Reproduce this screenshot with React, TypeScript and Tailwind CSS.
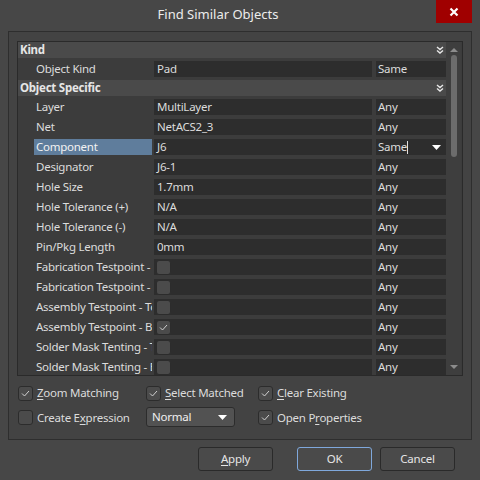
import React from 'react';

type Row = { label: string; value?: string; mode: string; check?: boolean; selected?: boolean };

const specific: Row[] = [
  { label: 'Layer', value: 'MultiLayer', mode: 'Any' },
  { label: 'Net', value: 'NetACS2_3', mode: 'Any' },
  { label: 'Component', value: 'J6', mode: 'Same', selected: true },
  { label: 'Designator', value: 'J6-1', mode: 'Any' },
  { label: 'Hole Size', value: '1.7mm', mode: 'Any' },
  { label: 'Hole Tolerance (+)', value: 'N/A', mode: 'Any' },
  { label: 'Hole Tolerance (-)', value: 'N/A', mode: 'Any' },
  { label: 'Pin/Pkg Length', value: '0mm', mode: 'Any' },
  { label: 'Fabrication Testpoint - Top', check: false, mode: 'Any' },
  { label: 'Fabrication Testpoint - Bottom', check: false, mode: 'Any' },
  { label: 'Assembly Testpoint - Top', check: false, mode: 'Any' },
  { label: 'Assembly Testpoint - Bottom', check: true, mode: 'Any' },
  { label: 'Solder Mask Tenting - Top', check: false, mode: 'Any' },
  { label: 'Solder Mask Tenting - Bottom', check: false, mode: 'Any' },
];

function Tick() {
  return (
    <svg width="9" height="7" viewBox="0 0 9 7" className="block">
      <path d="M1 3.5 L3.5 6 L8 1" fill="none" stroke="#d0d0d0" strokeWidth="1" />
    </svg>
  );
}

function Check({ on }: { on?: boolean }) {
  return (
    <div className="flex h-[15px] w-[15px] items-center justify-center rounded-[3px] border border-[#2c2c2c] bg-[#4b4b4b]">
      {on && <Tick />}
    </div>
  );
}

function Chevrons() {
  return (
    <svg width="8" height="8" viewBox="0 0 8 8" className="block">
      <path d="M1 1 L4 3.5 L7 1 M1 4.5 L4 7 L7 4.5" fill="none" stroke="#e8e8e8" strokeWidth="1.4" />
    </svg>
  );
}

function Caret({ color = '#ffffff' }: { color?: string }) {
  return (
    <svg width="9" height="5" viewBox="0 0 9 5" className="block">
      <path d="M0 0 H9 L4.5 5 Z" fill={color} />
    </svg>
  );
}

function Header({ title }: { title: string }) {
  return (
    <div className="flex h-[16px] items-center justify-between bg-[#4a4a4a] pl-[2px] pr-[2px]">
      <span className="font-bold text-[#e6e6e6]">{title}</span>
      <Chevrons />
    </div>
  );
}

function DataRow({ row }: { row: Row }) {
  return (
    <div className="flex h-[20px] shrink-0 bg-[#3c3c3c]">
      <div
        className={`ml-[16px] mt-[3px] h-[16px] w-[118px] overflow-hidden whitespace-nowrap px-[2px] leading-[16px] ${row.selected ? 'bg-[#5f7d9c] text-[#f2f2f2]' : 'text-[#dcdcdc]'}`}
      >
        {row.label}
      </div>
      <div className="ml-[2px] mt-[3px] flex h-[16px] w-[218px] items-center bg-[#2d2d2d] pl-[3px] leading-[16px] text-[#dcdcdc]">
        {row.check === undefined ? row.value : <div className="-ml-[1px]"><Check on={row.check} /></div>}
      </div>
      <div className="ml-[4px] mt-[3px] flex h-[16px] w-[70px] items-center bg-[#2d2d2d] pl-[2px] leading-[16px] text-[#dcdcdc]">
        {row.selected ? (
          <>
            <span>{row.mode}</span>
            <span className="h-[13px] w-px bg-[#e0e0e0]" />
            <span className="ml-auto mr-[5px]">
              <Caret />
            </span>
          </>
        ) : (
          row.mode
        )}
      </div>
    </div>
  );
}

function Opt({ label, u, on }: { label: string; u: number; on?: boolean }) {
  return (
    <div className="flex items-center gap-[4px] text-[#dcdcdc]">
      <Check on={on} />
      <span>
        {label.slice(0, u)}
        <span className="underline underline-offset-2">{label[u]}</span>
        {label.slice(u + 1)}
      </span>
    </div>
  );
}

function Btn({ children, primary }: { children: React.ReactNode; primary?: boolean }) {
  return (
    <button
      className={`h-[24px] w-[75px] rounded-[3px] border bg-[#4a4a4a] text-[#e6e6e6] ${primary ? 'border-[#7fa8dc]' : 'border-[#2a2a2a]'}`}
    >
      {children}
    </button>
  );
}

export default function App() {
  return (
    <div
      className="flex h-[480px] w-[480px] flex-col overflow-hidden bg-[#474747] text-[11.5px] leading-[16px] tracking-[-0.25px]"
      style={{ fontFamily: '"Noto Sans", "Open Sans", sans-serif' }}
    >
      <div className="flex h-[31px] shrink-0">
        <div className="flex-1 pt-[6px] text-center text-[13px] tracking-normal text-[#ececec]">Find Similar Objects</div>
        <div className="mr-[8px] flex h-[23px] w-[36px] items-center justify-center bg-[#a00000]">
          <svg width="10" height="10" viewBox="0 0 10 10">
            <path d="M1.5 1.5 L8.5 8.5 M8.5 1.5 L1.5 8.5" stroke="#ffffff" strokeWidth="2.2" />
          </svg>
        </div>
      </div>

      <div className="mx-[8px] flex h-[409px] shrink-0 flex-col border border-[#2e2e2e] bg-[#434343] px-[8px] pt-[9px]">
        <div className="flex h-[335px] shrink-0 overflow-hidden border border-[#2a2a2a] bg-[#3c3c3c]">
          <div className="flex w-[428px] flex-col">
            <Header title="Kind" />
            <DataRow row={{ label: 'Object Kind', value: 'Pad', mode: 'Same' }} />
            <div className="h-[2px] shrink-0 bg-[#3c3c3c]" />
            <Header title="Object Specific" />
            {specific.map((r, i) => (
              <DataRow key={i} row={r} />
            ))}
          </div>
          <div className="flex w-[15px] flex-col items-center bg-[#3e3e3e] pl-px">
            <div className="mt-[6px] rotate-180">
              <svg width="8" height="4" viewBox="0 0 8 4" className="block">
                <path d="M0 0 H8 L4 4 Z" fill="#8c8c8c" />
              </svg>
            </div>
            <div className="mt-[3px] h-[102px] w-[6px] rounded-[3px] bg-[#6c6c6c]" />
            <div className="mt-auto mb-[6px]">
              <svg width="8" height="4" viewBox="0 0 8 4" className="block">
                <path d="M0 0 H8 L4 4 Z" fill="#8c8c8c" />
              </svg>
            </div>
          </div>
        </div>

        <div className="ml-[1px] mt-[9px] grid grid-cols-[128px_112px_1fr] gap-y-[7px]">
          <Opt label="Zoom Matching" u={0} on />
          <Opt label="Select Matched" u={0} on />
          <Opt label="Clear Existing" u={0} on />
          <Opt label="Create Expression" u={8} />
          <div className="-mt-[1px] flex h-[20px] w-[89px] items-center justify-between rounded-[3px] border border-[#2c2c2c] bg-[#525252] pl-[5px] pr-[7px] text-[#f0f0f0]">
            <span>Normal</span>
            <Caret />
          </div>
          <Opt label="Open Properties" u={6} on />
        </div>
      </div>

      <div className="mr-[25px] mt-[7px] flex justify-end">
        <Btn>
          <span className="underline underline-offset-2">A</span>pply
        </Btn>
        <div className="ml-[24px]">
          <Btn primary>OK</Btn>
        </div>
        <div className="ml-[8px]">
          <Btn>Cancel</Btn>
        </div>
      </div>
    </div>
  );
}
